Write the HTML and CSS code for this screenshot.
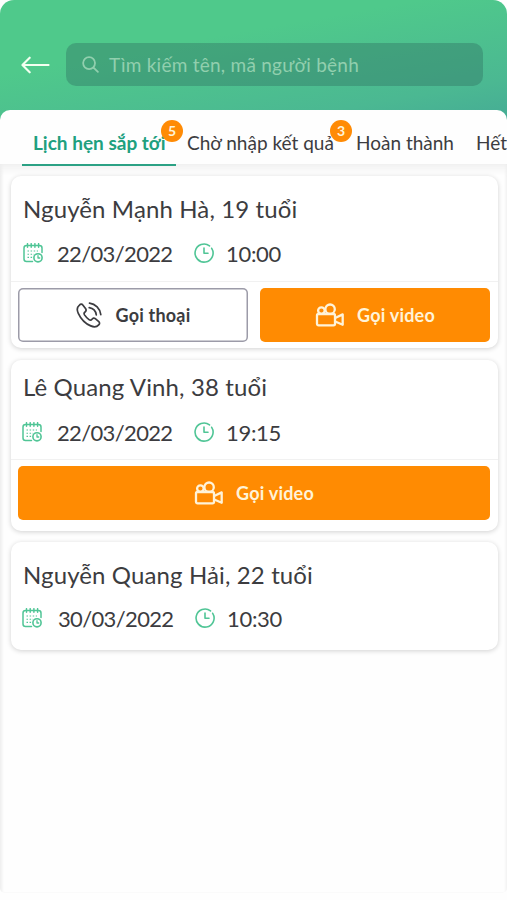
FILE: index.html
```html
<!DOCTYPE html>
<html lang="vi">
<head>
  <meta charset="UTF-8">
  <meta name="viewport" content="width=device-width, initial-scale=1.0">
  <title>Lịch hẹn</title>
  <link rel="stylesheet" href="styles.css">
</head>
<body>
  <svg class="sprite" aria-hidden="true">
    <symbol id="calendar" viewBox="0 0 20 20">
      <path d="M9.500 18.500H3.500Q1 18.500 1 16V5Q1 2.500 3.500 2.500H16.500Q19 2.500 19 5V9.500" stroke-width="1.500"/>
      <path d="M4.500 .7V4.200M8.200 .7V4.200M11.900 .7V4.200M15.600 .7V4.200" stroke-width="1.500"/>
      <path d="M4.500 8H15M4.500 11.200H11M4.500 14.400H9.500" stroke-width="1.100" stroke-dasharray="1.500 1.600" stroke-linecap="butt"/>
      <circle cx="15" cy="14.800" r="4.100" stroke-width="1.600"/>
      <path d="M15 12.700V15H16.700" stroke-width="1.300"/>
    </symbol>
    <symbol id="clock" viewBox="0 0 20 20">
      <path d="M15.500 2.900A9 9 0 1 0 17.700 5.300" stroke-width="1.600"/>
      <path d="M10 5V10.200H14" stroke-width="1.600"/>
    </symbol>
    <symbol id="phone" viewBox="0 0 26 26">
      <path d="M3.200 3.300C1 5.200 .8 8.200 2.300 11.300C4.700 16.500 9.500 21.600 14.700 23.900C18 25.300 20.700 25.100 22.700 22.900C24 21.500 23.700 20.500 22.500 19.400L19.300 16.700C18.100 15.700 17 16 16 17.200C15.100 18.400 14.300 18.500 13 17.600C11.200 16.300 9.700 14.700 8.500 12.900C7.700 11.600 7.800 10.900 9 10C10.200 9 10.500 7.900 9.500 6.600L7 3.200C5.900 1.800 4.700 1.900 3.200 3.300Z"/>
      <path d="M13.500 1.200A13 13 0 0 1 24.800 12.600M13.200 5.700A8.500 8.500 0 0 1 20.300 12.900"/>
    </symbol>
    <symbol id="camera" viewBox="0 0 29 24">
      <rect x="1.500" y="11" width="18" height="11.300" rx="1.500"/>
      <circle cx="5.900" cy="7.600" r="3.300"/>
      <circle cx="14.600" cy="6.200" r="4.700"/>
      <path d="M19.700 15L27.200 11.400V21.800L19.700 18.500"/>
    </symbol>
  </svg>

  <div class="screen">
    <header class="header">
      <svg class="back" viewBox="0 0 30 18"><path d="M28.500 9H2M9 1.500L1.500 9L9 16.500"/></svg>
      <div class="search">
        <svg class="search-icon" viewBox="0 0 18 18"><circle cx="7.500" cy="7.500" r="6.300"/><path d="M12.200 12.200L16.800 16.800"/></svg>
        <span>Tìm kiếm tên, mã người bệnh</span>
      </div>
    </header>

    <nav class="tabs">
      <div class="tab active"><span class="label">Lịch hẹn sắp tới</span><span class="badge">5</span></div>
      <div class="tab waiting"><span class="label">Chờ nhập kết quả</span><span class="badge">3</span></div>
      <div class="tab done"><span class="label">Hoàn thành</span></div>
      <div class="tab"><span class="label">Hết</span></div>
    </nav>

    <main class="list">
      <div class="card">
        <div class="info">
          <h2>Nguyễn Mạnh Hà, 19 tuổi</h2>
          <div class="meta">
            <svg class="icon"><use href="#calendar"/></svg>
            <span class="date">22/03/2022</span>
            <svg class="icon"><use href="#clock"/></svg>
            <span class="time">10:00</span>
          </div>
        </div>
        <div class="actions">
          <button class="btn voice"><svg class="phone"><use href="#phone"/></svg>Gọi thoại</button>
          <button class="btn video"><svg class="camera"><use href="#camera"/></svg>Gọi video</button>
        </div>
      </div>

      <div class="card second">
        <div class="info">
          <h2>Lê Quang Vinh, 38 tuổi</h2>
          <div class="meta">
            <svg class="icon"><use href="#calendar"/></svg>
            <span class="date">22/03/2022</span>
            <svg class="icon"><use href="#clock"/></svg>
            <span class="time">19:15</span>
          </div>
        </div>
        <div class="actions">
          <button class="btn video"><svg class="camera"><use href="#camera"/></svg>Gọi video</button>
        </div>
      </div>

      <div class="card third">
        <div class="info">
          <h2>Nguyễn Quang Hải, 22 tuổi</h2>
          <div class="meta">
            <svg class="icon"><use href="#calendar"/></svg>
            <span class="date">30/03/2022</span>
            <svg class="icon"><use href="#clock"/></svg>
            <span class="time">10:30</span>
          </div>
        </div>
      </div>
    </main>
  </div>
</body>
</html>
```

FILE: styles.css
```css
* {
  box-sizing: border-box;
}

body {
  margin: 0;
  height: 900px;
  background: #fefefe;
  font-family: Lato, "Noto Sans", sans-serif;
  color: #3c3c40;
  overflow: hidden;
}

svg {
  fill: none;
  stroke: currentColor;
  stroke-width: 1.7;
  stroke-linecap: round;
  stroke-linejoin: round;
  flex-shrink: 0;
}

.sprite {
  display: none;
}

.screen {
  height: 893px;
  border-radius: 14px 14px 5px 5px;
  overflow: hidden;
  display: flex;
  flex-direction: column;
}

.header {
  height: 122px;
  flex-shrink: 0;
  margin-bottom: -12px;
  padding: 43px 24px 36px 21px;
  background: linear-gradient(170deg, #4fc98b 35%, #4bb892 80%, #45ab95);
  display: flex;
  align-items: center;
  gap: 16px;
}

.back {
  width: 29px;
  height: 18px;
  color: #f3fff0;
  stroke-width: 2.2;
}

.search {
  flex: 1;
  height: 43px;
  border-radius: 10px;
  background: rgba(48, 112, 97, 0.4);
  display: flex;
  align-items: center;
  gap: 10px;
  padding-left: 16px;
  color: #91cfae;
  font-size: 19px;
  letter-spacing: 0.25px;
  white-space: nowrap;
}

.search-icon {
  width: 17px;
  height: 17px;
  stroke-width: 1.9;
}

.tabs {
  height: 54px;
  flex-shrink: 0;
  background: #fefefe;
  border-radius: 10px 10px 0 0;
  display: flex;
  padding-left: 22px;
  font-size: 19px;
  white-space: nowrap;
  position: relative;
}

.tab {
  position: relative;
  height: 56px;
  padding-top: 21px;
  line-height: 24px;
  flex-shrink: 0;
}

.active {
  width: 154px;
  margin-right: 11px;
  padding-left: 11px;
  border-bottom: 2px solid #2ba184;
  color: #20a07e;
  font-weight: bold;
}

.waiting {
  width: 169px;
}

.done {
  width: 120px;
}

.badge {
  position: absolute;
  top: 10px;
  left: 139px;
  width: 22px;
  height: 22px;
  border-radius: 50%;
  background: #ff8b05;
  color: #fff3d8;
  font-size: 14px;
  font-weight: bold;
  line-height: 22px;
  text-align: center;
}

.waiting .badge {
  left: 143px;
}

.list {
  flex: 1;
  padding: 12px 9px 0 11px;
  background: #fefefe;
  box-shadow: inset 0 12px 10px -8px #eee, inset 3px 0 3px -1px #eee, inset -2px 0 3px -1px #eee;
  display: flex;
  flex-direction: column;
  gap: 12px;
}

.card {
  height: 172px;
  border-radius: 10px;
  background: #fff;
  box-shadow: 0 1px 5px rgba(0, 0, 0, 0.18);
  display: flex;
  flex-direction: column;
}

.info {
  height: 106px;
  padding: 18px 12px 0;
  border-bottom: 1px solid #f1f1f1;
}

h2 {
  margin: 0;
  font-size: 24px;
  font-weight: normal;
  line-height: 30px;
  letter-spacing: 0.12px;
  white-space: nowrap;
}

.meta {
  height: 30px;
  margin-top: 14px;
  display: flex;
  align-items: center;
  font-size: 22px;
}

.icon {
  width: 20px;
  height: 20px;
  color: #50c596;
}

.date {
  width: 116px;
  margin: 0 21px 0 14px;
  letter-spacing: -0.65px;
}

.time {
  margin-left: 12px;
  letter-spacing: -0.3px;
}

.actions {
  flex: 1;
  padding: 6px 8px 0 7px;
  display: flex;
  gap: 12px;
}

.btn {
  flex: 1 1 0;
  height: 54px;
  padding: 0;
  border: none;
  border-radius: 5px;
  display: flex;
  align-items: center;
  justify-content: center;
  font-family: Lato, "Noto Sans", sans-serif;
  font-size: 18px;
  font-weight: bold;
  letter-spacing: 0.2px;
  color: #3c3c40;
}

.voice {
  box-shadow: inset 0 0 0 1.5px #9c9ba8;
  background: #fff;
  gap: 14px;
}

.video {
  background: #ff8b02;
  color: #fff3d8;
  gap: 12px;
}

.phone {
  width: 26px;
  height: 26px;
}

.camera {
  width: 30px;
  height: 24px;
  stroke-width: 2.3;
}

.second .info {
  padding-top: 12px;
  height: 100px;
}

.second {
  height: 171px;
}

.second .meta {
  margin-top: 15px;
}

.third {
  height: 108px;
  margin-top: -1px;
}

.third .info {
  border: none;
}

.third .meta {
  margin-top: 13px;
}

.second .meta .icon:first-child,
.third .meta .icon:first-child {
  margin-left: -1px;
  margin-right: 1px;
}

.third .date {
  margin: 0 21px 0 15px;
}
```
